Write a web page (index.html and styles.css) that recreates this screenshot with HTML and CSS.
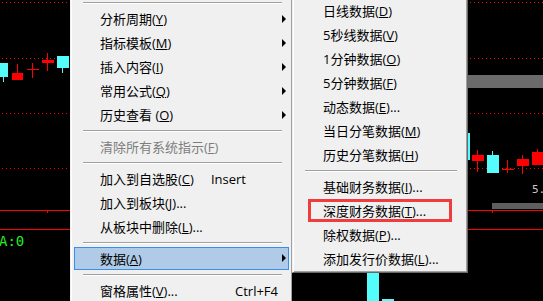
FILE: index.html
```html
<!DOCTYPE html>
<html lang="zh-CN">
<head>
<meta charset="utf-8">
<title>数据菜单</title>
<link rel="stylesheet" href="styles.css">
</head>
<body>
<svg class="chart" width="543" height="301" viewBox="0 0 543 301" shape-rendering="crispEdges">
  <rect width="543" height="301" fill="#000"/>
  <g class="dots">
    <line x1="2" y1="2.5" x2="543" y2="2.5"/>
    <line x1="2" y1="58.5" x2="543" y2="58.5"/>
    <line x1="2" y1="113.5" x2="543" y2="113.5"/>
    <line x1="2" y1="168.5" x2="543" y2="168.5"/>
  </g>
  <g class="solid">
    <line x1="0" y1="210.5" x2="543" y2="210.5"/>
    <line x1="0" y1="229.5" x2="543" y2="229.5"/>
  </g>
  <g class="red">
    <rect x="47" y="210" width="1" height="3"/>
    <rect x="492" y="210" width="1" height="3"/>
  </g>
  <rect class="bar1" x="468" y="75" width="75" height="13"/>
  <rect class="bar2" x="492" y="203" width="51" height="6"/>
  <g class="cyan">
    <rect x="0" y="63" width="8" height="14"/>
    <rect x="3" y="77" width="1" height="5"/>
    <rect x="57" y="56" width="12" height="12"/>
    <rect x="62" y="68" width="1" height="5"/>
    <rect x="458" y="133" width="12" height="27"/>
    <rect x="487" y="155" width="12" height="18"/>
    <rect x="492" y="151" width="1" height="4"/>
    <rect x="367" y="273" width="12" height="28"/>
    <rect x="382" y="299" width="12" height="2"/>
  </g>
  <g class="red">
    <rect x="12" y="73" width="11" height="7"/>
    <rect x="17" y="64" width="1" height="9"/>
    <rect x="27" y="69" width="12" height="1"/>
    <rect x="32" y="63" width="1" height="15"/>
    <rect x="42" y="60" width="12" height="3"/>
    <rect x="47" y="53" width="1" height="18"/>
    <rect x="472" y="155" width="12" height="6"/>
    <rect x="477" y="150" width="1" height="22"/>
    <rect x="502" y="169" width="12" height="1"/>
    <rect x="507" y="160" width="1" height="13"/>
    <rect x="517" y="159" width="12" height="7"/>
    <rect x="522" y="155" width="1" height="19"/>
    <rect x="532" y="152" width="12" height="13"/>
    <rect x="537" y="149" width="1" height="3"/>
  </g>
  <text class="label-green" x="-1" y="246">A:0</text>
  <text class="label-gray" x="532" y="193">5.</text>
</svg>

<div class="menu menu-main">
  <div class="sep"></div>
  <div class="item">分析周期(<u>Y</u>)<span class="arrow"></span></div>
  <div class="item">指标模板(<u>M</u>)<span class="arrow"></span></div>
  <div class="item">插入内容(<u>I</u>)<span class="arrow"></span></div>
  <div class="item">常用公式(<u>Q</u>)<span class="arrow"></span></div>
  <div class="item">历史查看 (<u>O</u>)<span class="arrow"></span></div>
  <div class="sep"></div>
  <div class="item disabled">清除所有系统指示(<u>F</u>)</div>
  <div class="sep"></div>
  <div class="item">加入到自选股(<u>C</u>)<span class="key-insert">Insert</span></div>
  <div class="item">加入到板块(<u>J</u>)...</div>
  <div class="item">从板块中删除(<u>L</u>)...</div>
  <div class="sep"></div>
  <div class="item active">数据(<u>A</u>)<span class="arrow"></span></div>
  <div class="sep"></div>
  <div class="item">窗格属性(<u>V</u>)...<span class="key-right">Ctrl+F4</span></div>
</div>

<div class="menu menu-sub">
  <div class="item">日线数据(<u>D</u>)</div>
  <div class="item">5秒线数据(<u>V</u>)</div>
  <div class="item">1分钟数据(<u>O</u>)</div>
  <div class="item">5分钟数据(<u>F</u>)</div>
  <div class="item">动态数据(<u>E</u>)...</div>
  <div class="item">当日分笔数据(<u>M</u>)</div>
  <div class="item">历史分笔数据(<u>H</u>)</div>
  <div class="sep"></div>
  <div class="item">基础财务数据(<u>I</u>)...</div>
  <div class="item">深度财务数据(<u>T</u>)...</div>
  <div class="item">除权数据(<u>P</u>)...</div>
  <div class="item">添加发行价数据(<u>L</u>)...</div>
</div>

<div class="mark"></div>
</body>
</html>
```

FILE: styles.css
```css
html, body {
  margin: 0;
  padding: 0;
}

body {
  width: 543px;
  height: 301px;
  overflow: hidden;
  background: #000;
  position: relative;
  font-family: "Open Sans", "Noto Sans CJK SC", sans-serif;
  font-size: 13px;
}

.chart {
  display: block;
}

.dots line {
  stroke: #ff0000;
  stroke-width: 1;
  stroke-dasharray: 1 3;
}

.solid line {
  stroke: #ff0000;
  stroke-width: 1;
}

.red rect {
  fill: #ff0000;
}

.cyan rect {
  fill: #54fcfc;
}

.bar1 {
  fill: #6b6b6b;
}

.bar2 {
  fill: #5e5e5e;
}

.label-green {
  fill: #22ee22;
  font-family: "DejaVu Sans Mono", monospace;
  font-size: 14px;
}

.label-gray {
  fill: #c8c8c8;
  font-family: "DejaVu Sans Mono", monospace;
  font-size: 11px;
}

.menu {
  position: absolute;
  top: -3px;
  box-sizing: border-box;
  background: #f0f0f0;
  border: 1px solid;
  padding: 1px 0 1px 1px;
}

.menu-main {
  left: 70px;
  width: 222px;
  border-color: #f0f0f0 #a0a0a0 #a0a0a0 #f0f0f0;
  box-shadow: inset 1px 1px #fff;
}

.menu-sub {
  left: 292px;
  width: 176px;
  padding-right: 1px;
  border-color: #f0f0f0 #696969 #696969 #f0f0f0;
  box-shadow: inset 1px 1px #fff, inset -1px -1px #a0a0a0;
}

.item {
  display: flex;
  align-items: center;
  box-sizing: border-box;
  height: 24px;
  line-height: 24px;
  padding: 0 5px 0 28px;
  white-space: nowrap;
  color: #000;
}

.menu-sub .item {
  padding-left: 29px;
}

.item.disabled {
  color: #7d7d7d;
}

.item.active {
  height: 23px;
  margin: 0 2px 1px;
  padding-left: 25px;
  padding-right: 2px;
  background: #b0cbe7;
  border: 1px solid #3a8ee6;
}

u {
  text-decoration-thickness: 1px;
  text-underline-offset: 1px;
}

.arrow {
  margin-left: auto;
  margin-bottom: 1px;
  width: 0;
  height: 0;
  border-left: 4px solid #000;
  border-top: 4px solid transparent;
  border-bottom: 4px solid transparent;
}

.key-insert {
  margin-left: 17px;
}

.key-right {
  margin-left: auto;
  margin-right: 8px;
}

.sep {
  height: 8px;
  box-sizing: border-box;
  padding-top: 3px;
  margin: 0 9px 0 11px;
}

.sep::before {
  content: "";
  display: block;
  border-top: 1px solid #a0a0a0;
  border-bottom: 1px solid #fff;
}

.mark {
  position: absolute;
  left: 308px;
  top: 199px;
  width: 144px;
  height: 23px;
  box-sizing: border-box;
  border: 3px solid #f03c3c;
}
```
